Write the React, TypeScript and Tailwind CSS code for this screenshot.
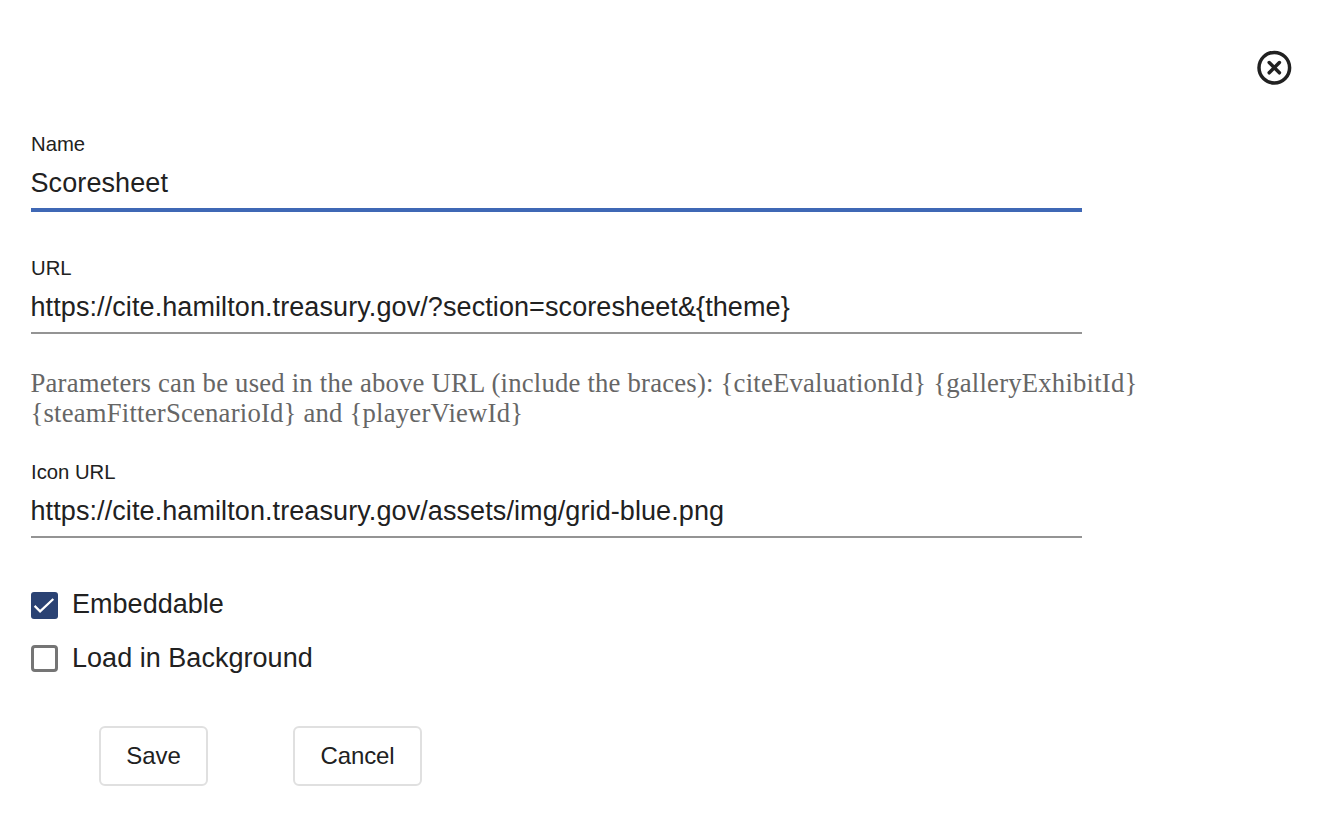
type FieldProps = { label: string; value: string; active?: boolean };

function Field({ label, value, active }: FieldProps) {
  return (
    <div className="flex h-[86px] w-[1051px] flex-col">
      <label className="h-6 text-[20.3px] leading-6 whitespace-pre">{label}</label>
      <div className="mt-[11px] -ml-[0.5px] h-8 text-[27px] leading-8 tracking-[0.09px] whitespace-pre">{value}</div>
      <div className={active ? 'mt-[9px] h-1 bg-[#3f68b5]' : 'mt-[9px] h-0.5 bg-[#949494]'} />
    </div>
  );
}

function Option({ label, checked }: { label: string; checked?: boolean }) {
  return (
    <div role="checkbox" aria-checked={!!checked} className="flex h-[27px] items-center">
      {checked ? (
        <span className="size-[27px] rounded-[3px] bg-[#2a4273]">
          <svg viewBox="0 0 27 27" className="size-[27px]" fill="none" stroke="#fff" strokeWidth="2.2">
            <path d="M3.6 13.9 9.1 19.4 22.3 7" />
          </svg>
        </span>
      ) : (
        <span className="size-[27px] rounded-[4px] border-[3px] border-[#757575]" />
      )}
      <span className={(checked ? '-mt-[3px]' : '-mt-px') + ' ml-3.5 text-[27px] leading-8 tracking-[0.03px] whitespace-pre'}>{label}</span>
    </div>
  );
}

export default function App() {
  return (
    <main className="flex h-[824px] w-[1338px] flex-col bg-white pl-[31px] font-['Liberation_Sans',Arial,sans-serif] text-[#212121]">
      <div className="flex h-[132px] justify-end pt-[50px] pr-[46px]">
        <button aria-label="Close" className="size-9">
          <svg viewBox="0 0 36 36" className="size-9" fill="none" stroke="#212121">
            <circle cx="18.3" cy="17.7" r="15.3" strokeWidth="3.5" />
            <path d="M13.2 12.6 23.4 22.8M23.4 12.6 13.2 22.8" strokeWidth="3.5" strokeLinecap="round" />
          </svg>
        </button>
      </div>
      <Field label="Name" value="Scoresheet" active />
      <div className="mt-[38px]">
        <Field label="URL" value="https://cite.hamilton.treasury.gov/?section=scoresheet&{theme}" />
      </div>
      <p className="mt-[26px] -ml-[0.5px] h-[60px] font-['Liberation_Serif',serif] text-[26.7px] leading-[30px] tracking-[0.21px] whitespace-pre text-[#666]">
        {'Parameters can be used in the above URL (include the braces): {citeEvaluationId} {galleryExhibitId}\n{steamFitterScenarioId} and {playerViewId}'}
      </p>
      <div className="mt-8">
        <Field label="Icon URL" value="https://cite.hamilton.treasury.gov/assets/img/grid-blue.png" />
      </div>
      <div className="mt-[46px] flex flex-col gap-[26px]">
        <Option label="Embeddable" checked />
        <Option label="Load in Background" />
      </div>
      <div className="mt-[54px] ml-[68px] flex gap-[85px]">
        <button className="h-[60px] w-[109px] rounded-md border-2 border-[#e0e0e0] text-[24px] leading-7 tracking-[-0.1px]">Save</button>
        <button className="h-[60px] w-[129px] rounded-md border-2 border-[#e0e0e0] text-[24px] leading-7 tracking-[-0.1px]">Cancel</button>
      </div>
    </main>
  );
}
